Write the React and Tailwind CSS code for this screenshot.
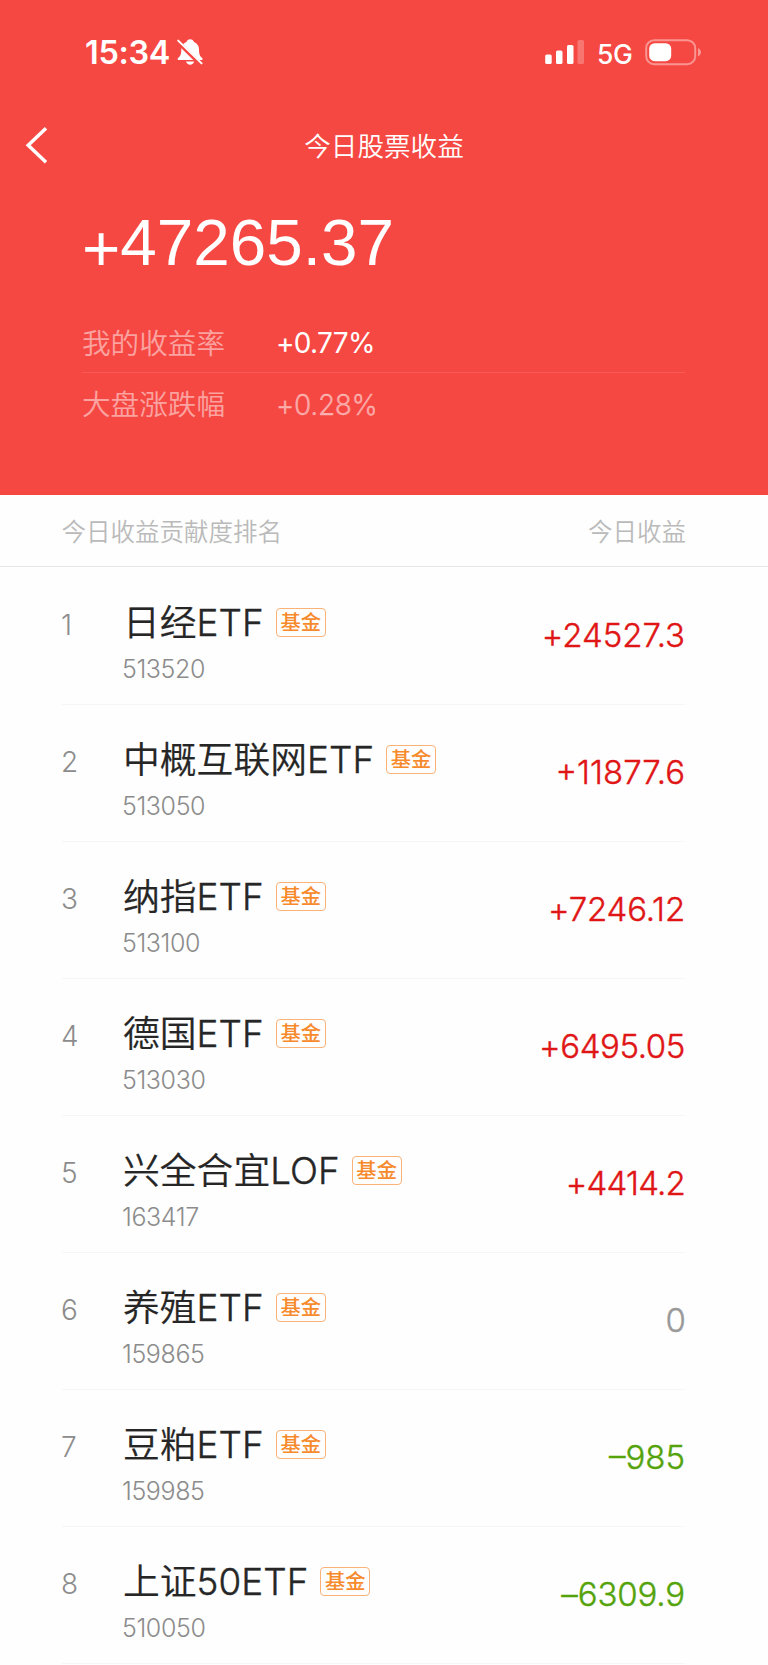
const CJK = "font-['Noto_Sans_CJK_SC',sans-serif]";
const NUM = "font-['Inter','Noto_Sans_CJK_SC',sans-serif]";

const holdings = [
  { rank: 1, zh: "日经", latin: "ETF", code: "513520", profit: "+24527.3", tracking: "tracking-[-0.050px]" },
  { rank: 2, zh: "中概互联网", latin: "ETF", code: "513050", profit: "+11877.6", tracking: "tracking-[0px]" },
  { rank: 3, zh: "纳指", latin: "ETF", code: "513100", profit: "+7246.12", tracking: "tracking-[-0.150px]" },
  { rank: 4, zh: "德国", latin: "ETF", code: "513030", profit: "+6495.05", tracking: "tracking-[-0.4px]" },
  { rank: 5, zh: "兴全合宜", latin: "LOF", code: "163417", profit: "+4414.2", tracking: "tracking-[-0.8px]" },
  { rank: 6, zh: "养殖", latin: "ETF", code: "159865", profit: "0", tracking: "tracking-[-0.8px]" },
  { rank: 7, zh: "豆粕", latin: "ETF", code: "159985", profit: "–985", tracking: "tracking-[0px]" },
  { rank: 8, zh: "上证", latin: "50ETF", code: "510050", profit: "–6309.9", tracking: "tracking-[-0.150px]" },
];

function profitColor(value) {
  if (value.startsWith("+")) return "text-[#e01515]";
  if (value.startsWith("–")) return "text-[#55a30b]";
  return "text-[#999999]";
}

function StatusBar() {
  return (
    <div className="flex h-[104px] items-center justify-between pl-[85px] pr-[67px] text-white">
      <div className="flex items-center">
        <span className="w-[85px] pt-[2px] text-[32.400px] font-semibold leading-[40px] tracking-[-0.3px]">15:34</span>
        <svg className="ml-[6px] h-[28px] w-[28px]" viewBox="0 0 28 28">
          <path
            d="M14.2 1.200c-1.900 0-3.400 1.200-3.800 2.800C7 5.300 5.300 8 5.300 11.400c0 4.600-.9 6.600-3 8.400-.7.600-.8 1.200-.5 1.700.2.400.6.600 1.200.600h22.300c.6 0 1-.2 1.200-.6.3-.5.1-1.100-.5-1.700-2.100-1.800-3-3.800-3-8.400 0-3.400-1.700-6.100-5-7.400-.5-1.600-1.900-2.800-3.800-2.800z"
            fill="white"
          />
          <path d="M10 23.600h8.200c-.5 1.900-2.100 3.100-4.100 3.100s-3.600-1.200-4.100-3.100z" fill="white" />
          <path d="M1.200 3.400 25.400 27.200" stroke="#f64843" strokeWidth="4" />
          <path d="M2.200 2.600 25.600 25.400" stroke="white" strokeWidth="2" strokeLinecap="round" />
        </svg>
      </div>
      <div className="flex items-center">
        <svg className="h-[26px] w-[40px]" viewBox="0 0 40 26" fill="white">
          <rect x="0.200" y="15.500" width="6.500" height="9.500" rx="1.600" />
          <rect x="11" y="11.500" width="6.500" height="13.500" rx="1.600" />
          <rect x="22" y="6" width="6.500" height="19" rx="1.600" />
          <rect x="32.500" y="1" width="6.500" height="24" rx="1.600" opacity="0.25" />
        </svg>
        <span className="ml-[12px] w-[36px] pt-[3px] text-[26.500px] font-[450] leading-[32px] tracking-[-0.5px]">5G</span>
        <svg className="ml-[12px] h-[27px] w-[56px]" viewBox="0 0 56 27">
          <rect x="1.200" y="1.200" width="49" height="24" rx="8" fill="none" stroke="white" strokeOpacity="0.42" strokeWidth="2" />
          <rect x="4.200" y="4.200" width="22" height="18" rx="5.500" fill="white" />
          <path d="M53 9.200c1.800.6 2.900 2.100 2.900 4s-1.100 3.400-2.900 4z" fill="white" fillOpacity="0.45" />
        </svg>
      </div>
    </div>
  );
}

function Summary() {
  return (
    <header className="h-[495px] bg-[#f64843] text-white">
      <StatusBar />
      <div className="grid h-[82px] grid-cols-[1fr_auto_1fr] items-center">
        <svg className="ml-[25px] h-[38px] w-[24px]" viewBox="0 0 24 38">
          <path d="M21 2.200 3.200 19.200 21 36.200" fill="none" stroke="white" strokeWidth="3.500" />
        </svg>
        <h1 className={`${CJK} text-[26.600px] font-[350] leading-[40px]`}>今日股票收益</h1>
      </div>
      <div className="pl-[82px] pr-[83px]">
        <div className="flex h-[130px] pt-[19px] font-['Liberation_Sans',sans-serif] text-[65.600px] leading-[76px]">
          <span className="pt-[6px]">+</span>
          <span>47265.37</span>
        </div>
        <div className="flex h-[57px] items-center border-b border-white/10">
          <span className={`${CJK} w-[194px] pb-[4px] text-[28.600px] font-[350] leading-[40px] text-white/50`}>我的收益率</span>
          <span className="pb-[2px] text-[28px] leading-[40px] tracking-[-0.7px]">+0.77%</span>
        </div>
        <div className="flex h-[64px] items-center">
          <span className={`${CJK} w-[194px] pb-[4px] text-[28.600px] font-[350] leading-[40px] text-white/50`}>大盘涨跌幅</span>
          <span className="pb-[1px] text-[28px] font-[350] leading-[40px] tracking-[-0.3px] text-white/50 [-webkit-text-stroke:0.3px]">
            +0.28%
          </span>
        </div>
      </div>
    </header>
  );
}

function HoldingRow({ rank, zh, latin, code, profit, tracking }) {
  return (
    <li className="flex h-[137px] border-b border-[#f6f6f6]">
      <span className="-ml-px w-[62px] pt-[40px] text-[28px] font-[330] leading-[34px] text-[#8c8c8c]">{rank}</span>
      <div className="flex-1 pt-[29px]">
        <div className="flex h-[48px] items-center">
          <span className="flex items-baseline whitespace-nowrap text-[36.800px] leading-[48px] text-[#262626]">
            <span className={`${CJK} font-[350] [-webkit-text-stroke:0.2px]`}>{zh}</span>
            <span className="font-[350] tracking-[0.050px] [-webkit-text-stroke:0.4px]">{latin}</span>
          </span>
          <span className={`${CJK} ml-[12px] mt-[2px] flex h-[29px] w-[50px] items-center justify-center rounded-[4px] border-[1.500px] border-[#fbb277] pb-[2px] text-[20.300px] font-medium leading-none text-[#f68a2c]`}>
            基金
          </span>
        </div>
        <div className="-ml-px pt-[7px] text-[25px] font-[330] leading-[34px] tracking-[-0.4px] text-[#8c8c8c]">{code}</div>
      </div>
      <span className={`pt-[46px] text-[33px] font-[350] leading-[42px] [-webkit-text-stroke:0.4px] ${tracking} ${profitColor(profit)}`}>
        {profit}
      </span>
    </li>
  );
}

export default function App() {
  return (
    <main className={`${NUM} h-[1665px] w-[768px] overflow-hidden bg-[#fefefe]`}>
      <Summary />
      <div className={`${CJK} flex h-[72px] items-center justify-between border-b border-[#e6e6e6] pl-[61.500px] pr-[82px] text-[24.500px] font-[350] leading-[36px] text-[#bababa]`}>
        <span>今日收益贡献度排名</span>
        <span>今日收益</span>
      </div>
      <ul className="pl-[62px] pr-[83px] pt-px">
        {holdings.map((item) => (
          <HoldingRow key={item.rank} {...item} />
        ))}
      </ul>
    </main>
  );
}
